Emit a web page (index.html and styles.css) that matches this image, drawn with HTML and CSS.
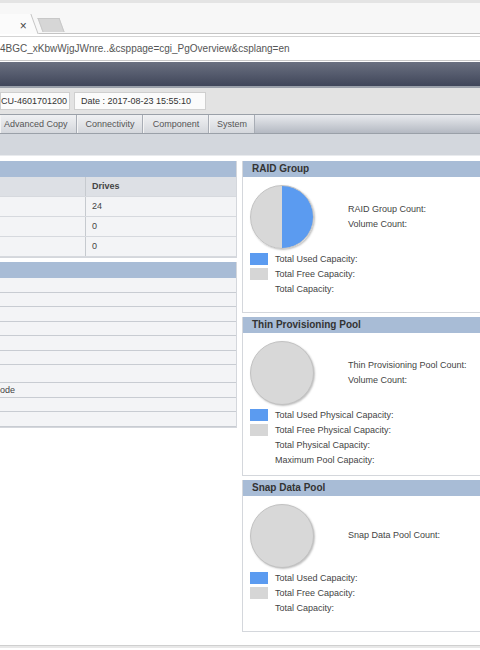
FILE: index.html
```html
<!DOCTYPE html>
<html lang="en">
<head>
    <meta charset="UTF-8">
    <title>Overview</title>
    <link rel="stylesheet" href="styles.css">
</head>
<body>
    <div class="browser-tabs">
        <div class="tab-active"><span class="tab-close">×</span></div>
        <div class="tab-new"></div>
    </div>
    <div class="address-bar">4BGC_xKbwWjgJWnre..&amp;csppage=cgi_PgOverview&amp;csplang=en</div>

    <div class="app-header"></div>

    <div class="info-bar">
        <div class="info-box info-serial">CU-4601701200</div>
        <div class="info-box info-date">Date : 2017-08-23 15:55:10</div>
    </div>

    <div class="menu-bar">
        <div class="menu-item menu-first">Advanced Copy</div>
        <div class="menu-item">Connectivity</div>
        <div class="menu-item">Component</div>
        <div class="menu-item menu-last">System</div>
    </div>
    <div class="sub-bar"></div>

    <div class="content">
        <div class="col-left">
            <div class="panel">
                <div class="panel-title"></div>
                <div class="drive-table">
                    <div class="drive-row drive-head">
                        <div class="drive-cell"></div>
                        <div class="drive-cell">Drives</div>
                    </div>
                    <div class="drive-row">
                        <div class="drive-cell"></div>
                        <div class="drive-cell">24</div>
                    </div>
                    <div class="drive-row">
                        <div class="drive-cell"></div>
                        <div class="drive-cell">0</div>
                    </div>
                    <div class="drive-row">
                        <div class="drive-cell"></div>
                        <div class="drive-cell">0</div>
                    </div>
                </div>
            </div>

            <div class="panel">
                <div class="panel-title"></div>
                <div class="info-list">
                    <div class="info-row"></div>
                    <div class="info-row"></div>
                    <div class="info-row"></div>
                    <div class="info-row"></div>
                    <div class="info-row"></div>
                    <div class="info-row"></div>
                    <div class="info-row info-tall"></div>
                    <div class="info-row">ode</div>
                    <div class="info-row"></div>
                    <div class="info-row"></div>
                </div>
            </div>
        </div>

        <div class="col-right">
            <div class="pool-panel">
                <div class="pool-title">RAID Group</div>
                <div class="pool-body">
                    <div class="pool-top">
                        <div class="pie pie-half"></div>
                        <div class="pool-counts">
                            <div>RAID Group Count:</div>
                            <div>Volume Count:</div>
                        </div>
                    </div>
                    <div class="legend">
                        <div class="legend-row"><span class="swatch swatch-used"></span>Total Used Capacity:</div>
                        <div class="legend-row"><span class="swatch swatch-free"></span>Total Free Capacity:</div>
                        <div class="legend-row"><span class="swatch"></span>Total Capacity:</div>
                    </div>
                </div>
            </div>

            <div class="pool-panel pool-thin">
                <div class="pool-title">Thin Provisioning Pool</div>
                <div class="pool-body">
                    <div class="pool-top">
                        <div class="pie"></div>
                        <div class="pool-counts">
                            <div>Thin Provisioning Pool Count:</div>
                            <div>Volume Count:</div>
                        </div>
                    </div>
                    <div class="legend">
                        <div class="legend-row"><span class="swatch swatch-used"></span>Total Used Physical Capacity:</div>
                        <div class="legend-row"><span class="swatch swatch-free"></span>Total Free Physical Capacity:</div>
                        <div class="legend-row"><span class="swatch"></span>Total Physical Capacity:</div>
                        <div class="legend-row"><span class="swatch"></span>Maximum Pool Capacity:</div>
                    </div>
                </div>
            </div>

            <div class="pool-panel">
                <div class="pool-title">Snap Data Pool</div>
                <div class="pool-body">
                    <div class="pool-top">
                        <div class="pie"></div>
                        <div class="pool-counts">
                            <div>Snap Data Pool Count:</div>
                        </div>
                    </div>
                    <div class="legend">
                        <div class="legend-row"><span class="swatch swatch-used"></span>Total Used Capacity:</div>
                        <div class="legend-row"><span class="swatch swatch-free"></span>Total Free Capacity:</div>
                        <div class="legend-row"><span class="swatch"></span>Total Capacity:</div>
                    </div>
                </div>
            </div>
        </div>
    </div>

    <div class="footer-line"></div>
</body>
</html>
```

FILE: styles.css
```css
body {
    margin: 0;
    width: 480px;
    height: 650px;
    overflow: hidden;
    font-family: "Liberation Sans", Arial, sans-serif;
    font-size: 9px;
    color: #333;
    background: white;
}

/* browser chrome */
.browser-tabs {
    height: 34px;
    background: #f7f7f7;
    border-top: 3px solid #e4e4e4;
    border-bottom: 1px solid #c4c4c4;
    box-sizing: border-box;
    display: flex;
    align-items: flex-end;
}

.tab-active {
    width: 40px;
    height: 20px;
    background: #fbfbfb;
    border-right: 1px solid #c4c4c4;
    transform: skewX(20deg);
    margin-left: -6px;
    position: relative;
    top: 1px;
}

.tab-close {
    position: absolute;
    left: 25px;
    top: 5px;
    font-size: 12px;
    color: #444;
    transform: skewX(-20deg);
}

.tab-new {
    width: 20px;
    height: 13px;
    margin-left: 5px;
    margin-bottom: 1px;
    background: #d6d6d6;
    border: 1px solid #c8c8c8;
    border-bottom: none;
    transform: skewX(20deg);
}

.address-bar {
    height: 25px;
    line-height: 24px;
    background: white;
    border-top: 1px solid #d4d4d4;
    border-bottom: 1px solid #c8c8c8;
    box-sizing: border-box;
    margin-top: 2px;
    font-size: 10px;
    color: #555;
    white-space: nowrap;
    overflow: hidden;
}

.app-header {
    height: 24px;
    margin-top: 1px;
    background: linear-gradient(#6a7080, #40465a);
    border-bottom: 2px solid #9aa0aa;
}

.info-bar {
    height: 26px;
    background: #e3e3e3;
    display: flex;
    align-items: center;
    gap: 4px;
}

.info-box {
    height: 16px;
    line-height: 16px;
    background: #fbfbfb;
    border: 1px solid #cfcfcf;
    padding: 0 6px;
    font-size: 9px;
    color: #333;
    white-space: nowrap;
}

.info-serial {
    padding-left: 0;
    width: 62px;
}

.info-date {
    width: 118px;
}

.menu-bar {
    height: 20px;
    background: linear-gradient(#e8eaee, #b4b9c2);
    border-top: 1px solid #9aa0a8;
    border-bottom: 1px solid #9aa0a8;
    display: flex;
    box-sizing: border-box;
}

.menu-item {
    height: 18px;
    line-height: 18px;
    text-align: center;
    box-sizing: border-box;
    font-size: 9px;
    color: #555;
    white-space: nowrap;
    background: linear-gradient(#f0f1f3, #d4d7dc);
    border-right: 1px solid #a8adb5;
    border-left: 1px solid #f4f4f4;
    width: 66px;
}

.menu-first {
    width: 77px;
    text-align: left;
    padding-left: 3px;
}

.menu-last {
    width: 46px;
}

.sub-bar {
    height: 21px;
    background: #d3d7dd;
    border-bottom: 1px solid #e9ebee;
}

/* content */
.content {
    display: flex;
    gap: 5px;
    padding-top: 5px;
}

.col-left {
    width: 237px;
    display: flex;
    flex-direction: column;
    gap: 4px;
}

.col-right {
    flex: 1;
    display: flex;
    flex-direction: column;
    gap: 4px;
}

.panel {
    border: 1px solid #d4d7dc;
    border-left: none;
    border-top: none;
    background: #f3f4f6;
}

.panel-title {
    height: 16px;
    background: #a8bcd6;
}

.drive-row {
    display: grid;
    grid-template-columns: 86px 1fr;
    height: 20px;
    border-bottom: 1px solid #d6d9de;
    box-sizing: border-box;
}

.drive-cell {
    padding-left: 6px;
    line-height: 19px;
    color: #444;
}

.drive-cell:first-child {
    border-right: 1px solid #c6cacf;
}

.drive-head {
    background: #dde0e5;
    font-weight: bold;
    color: #444;
}

.info-row {
    height: 14.5px;
    border-bottom: 1px solid #c8ccd2;
    box-sizing: border-box;
    line-height: 15px;
    font-size: 9px;
    color: #444;
}

.info-tall {
    height: 18px;
}

/* pools */
.pool-panel {
    border: 1px solid #d4d7dc;
    border-right: none;
    border-top: none;
    height: 152px;
    box-sizing: border-box;
}

.pool-thin {
    height: 159px;
}

.pool-title {
    height: 16px;
    line-height: 16px;
    background: #a8bcd6;
    font-size: 10px;
    font-weight: bold;
    color: #333;
    padding-left: 9px;
}

.pool-body {
    padding: 8px 0 0 7px;
}

.pool-top {
    display: flex;
    align-items: center;
}

.pie {
    width: 62px;
    height: 62px;
    border-radius: 50%;
    background: #d8d8d8;
    border: 1px solid #c2c2c2;
    box-shadow: 1px 1px 2px rgba(0,0,0,0.25);
}

.pie-half {
    background: linear-gradient(to right, #d8d8d8 50%, #5b9bf0 50%);
}

.pool-counts {
    margin-left: 34px;
    line-height: 15px;
    color: #444;
    margin-top: -1px;
}

.legend {
    margin-top: 2px;
}

.legend-row {
    display: flex;
    align-items: center;
    height: 15px;
    color: #444;
}

.swatch {
    width: 18px;
    height: 12px;
    margin-right: 7px;
}

.swatch-used {
    background: #5b9bf0;
}

.swatch-free {
    background: #d6d6d6;
}

.footer-line {
    margin-top: 13px;
    height: 2px;
    border-top: 1px solid #cfcfcf;
    background: #e8e8e8;
}
```
